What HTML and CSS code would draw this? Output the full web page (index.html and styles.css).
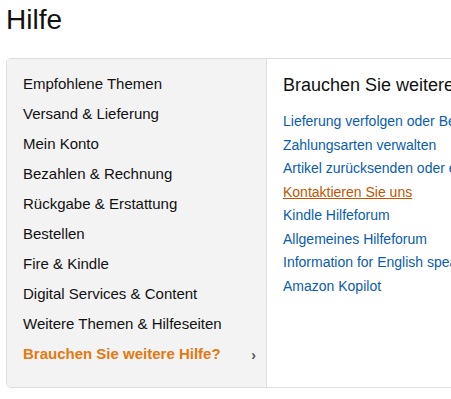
FILE: index.html
```html
<html>
<head>
<link rel="stylesheet" href="styles.css">
</head>
<body>
<h1 class="pagetitle">Hilfe</h1>
<div class="helpbox">
    <ul class="topics">
        <li>Empfohlene Themen</li>
        <li>Versand &amp; Lieferung</li>
        <li>Mein Konto</li>
        <li>Bezahlen &amp; Rechnung</li>
        <li>Rückgabe &amp; Erstattung</li>
        <li>Bestellen</li>
        <li>Fire &amp; Kindle</li>
        <li>Digital Services &amp; Content</li>
        <li>Weitere Themen &amp; Hilfeseiten</li>
        <li class="active">Brauchen Sie weitere Hilfe? <span class="chevron">›</span></li>
    </ul>
    <div class="content">
        <h2>Brauchen Sie weitere Hilfe?</h2>
        <ul class="links">
            <li><a href="#">Lieferung verfolgen oder Bestellung anzeigen</a></li>
            <li><a href="#">Zahlungsarten verwalten</a></li>
            <li><a href="#">Artikel zurücksenden oder ersetzen</a></li>
            <li><a href="#" class="hover">Kontaktieren Sie uns</a></li>
            <li><a href="#">Kindle Hilfeforum</a></li>
            <li><a href="#">Allgemeines Hilfeforum</a></li>
            <li><a href="#">Information for English speaking customers</a></li>
            <li><a href="#">Amazon Kopilot</a></li>
        </ul>
    </div>
</div>
</body>
</html>
```

FILE: styles.css
```css
html, body {
    margin: 0;
    padding: 0;
    overflow: hidden;
    background: white;
}
body {
    font-family: "Liberation Sans", Arial, sans-serif;
    color: #111;
    padding-left: 6px;
}
.pagetitle {
    font-size: 28px;
    font-weight: normal;
    line-height: 32px;
    margin: 4px 0 22px 0;
}
.helpbox {
    display: flex;
    width: 700px;
    height: 330px;
    box-sizing: border-box;
    border: 1px solid #ddd;
    border-radius: 5px;
    overflow: hidden;
}
.topics {
    list-style: none;
    margin: 0;
    padding: 10px 0 0 16px;
    width: 260px;
    flex: none;
    box-sizing: border-box;
    background: #f3f3f3;
    border-right: 1px solid #ddd;
}
.topics li {
    font-size: 15px;
    line-height: 30px;
    height: 30px;
    position: relative;
}
.topics li.active {
    color: #e47911;
    font-weight: bold;
}
.chevron {
    position: absolute;
    right: 10px;
    top: 1px;
    color: #555;
    font-size: 14px;
}
.content {
    flex: 1;
    padding: 14px 0 0 16px;
}
.content h2 {
    font-size: 18px;
    font-weight: normal;
    line-height: 24px;
    margin: 0 0 13px 0;
    white-space: nowrap;
}
.links {
    list-style: none;
    margin: 0;
    padding: 0;
}
.links li {
    font-size: 14px;
    line-height: 23.5px;
    white-space: nowrap;
}
.links a {
    color: #0a5cb0;
    text-decoration: none;
}
.links a.hover {
    color: #c45500;
    text-decoration: underline;
}
```
